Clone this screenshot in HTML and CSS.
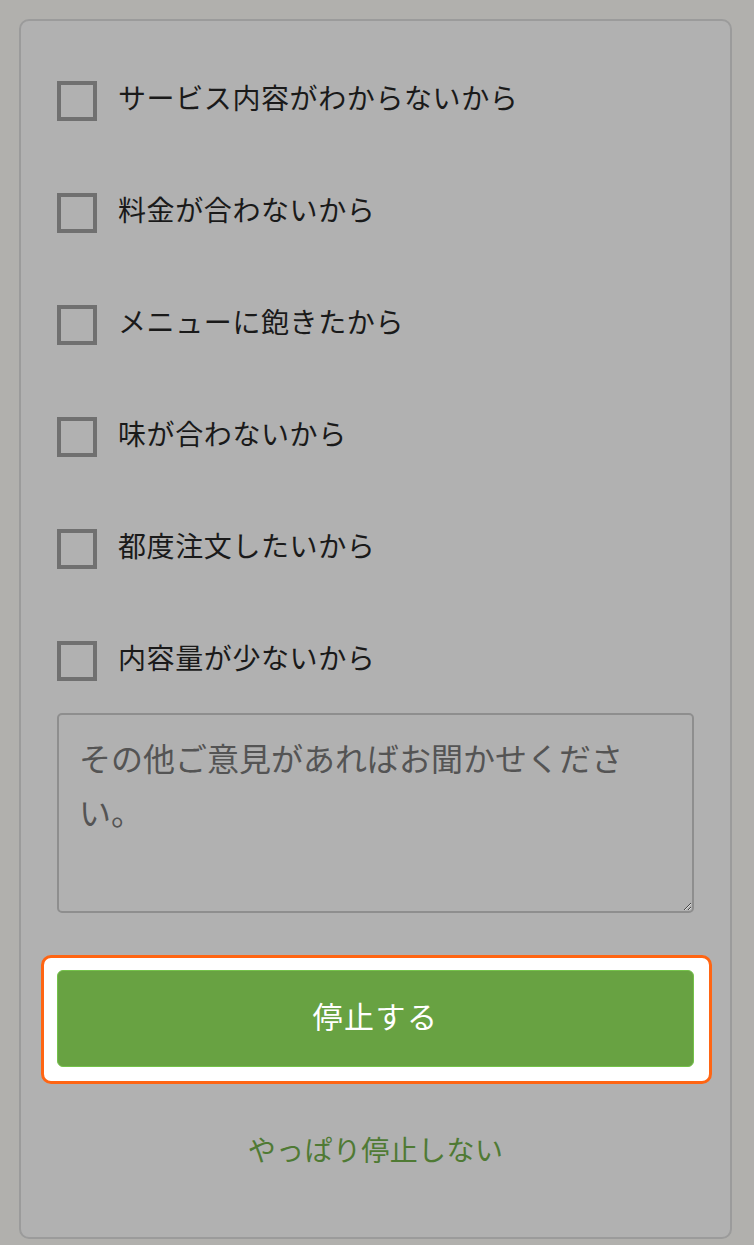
FILE: index.html
```html
<!DOCTYPE html>
<html lang="ja">
<head>
    <meta charset="UTF-8">
    <meta name="viewport" content="width=device-width, initial-scale=1.0">
    <title>停止理由</title>
    <link rel="stylesheet" href="styles.css">
</head>
<body>
    <div class="card">
        <div class="reasons">
            <label class="reason"><input type="checkbox"><span>サービス内容がわからないから</span></label>
            <label class="reason"><input type="checkbox"><span>料金が合わないから</span></label>
            <label class="reason"><input type="checkbox"><span>メニューに飽きたから</span></label>
            <label class="reason"><input type="checkbox"><span>味が合わないから</span></label>
            <label class="reason"><input type="checkbox"><span>都度注文したいから</span></label>
            <label class="reason"><input type="checkbox"><span>内容量が少ないから</span></label>
        </div>
        <textarea class="comment" placeholder="その他ご意見があればお聞かせください。"></textarea>
        <div class="highlight">
            <button class="stop">停止する</button>
        </div>
        <a class="cancel" href="#">やっぱり停止しない</a>
    </div>
</body>
</html>
```

FILE: styles.css
```css
body {
    margin: 0;
    padding: 19px 22px 6px 19px;
    background-color: #b1b0ad;
    font-family: "Noto Sans CJK JP", "Noto Sans", sans-serif;
    color: #1a1a1a;
}

.card {
    background-color: #b1b1b1;
    border: 2px solid #9b9b9b;
    border-radius: 10px;
    padding: 60px 36px 67px 36px;
}

.reasons {
    display: flex;
    flex-direction: column;
    gap: 72px;
}

.reason {
    display: flex;
    align-items: center;
    gap: 21px;
    height: 40px;
    font-size: 28px;
    line-height: 1;
    letter-spacing: 0.6px;
}

.reason span {
    margin-top: -9px;
}

.reason input {
    appearance: none;
    -webkit-appearance: none;
    margin: 0;
    width: 40px;
    height: 40px;
    box-sizing: border-box;
    border: 4px solid #707070;
    background-color: #b1b1b1;
    flex-shrink: 0;
}

.comment {
    display: block;
    box-sizing: border-box;
    width: 100%;
    height: 200px;
    margin-top: 32px;
    padding: 15px 50px 14px 20px;
    border: 2px solid #8e8e8e;
    border-radius: 5px;
    background-color: #b1b1b1;
    font-family: inherit;
    font-size: 32px;
    line-height: 1.7;
    color: #1a1a1a;
}

.comment::placeholder {
    color: #545454;
    opacity: 1;
}

.highlight {
    margin: 42px -18px 0 -16px;
    padding: 12px 15px 14px 13px;
    background-color: #fff;
    border: 3px solid #ff6513;
    border-radius: 10px;
}

.stop {
    display: block;
    width: 100%;
    height: 97px;
    padding: 0 0 8px 0;
    background-color: #68a242;
    border: 1px solid #74c24a;
    border-radius: 6px;
    color: #fff;
    font-family: inherit;
    font-size: 30px;
    letter-spacing: 1.5px;
    cursor: pointer;
}

.cancel {
    display: block;
    margin-top: 44px;
    text-align: center;
    font-size: 28px;
    line-height: 42px;
    letter-spacing: 0.4px;
    color: #4f7a34;
    text-decoration: none;
}
```
